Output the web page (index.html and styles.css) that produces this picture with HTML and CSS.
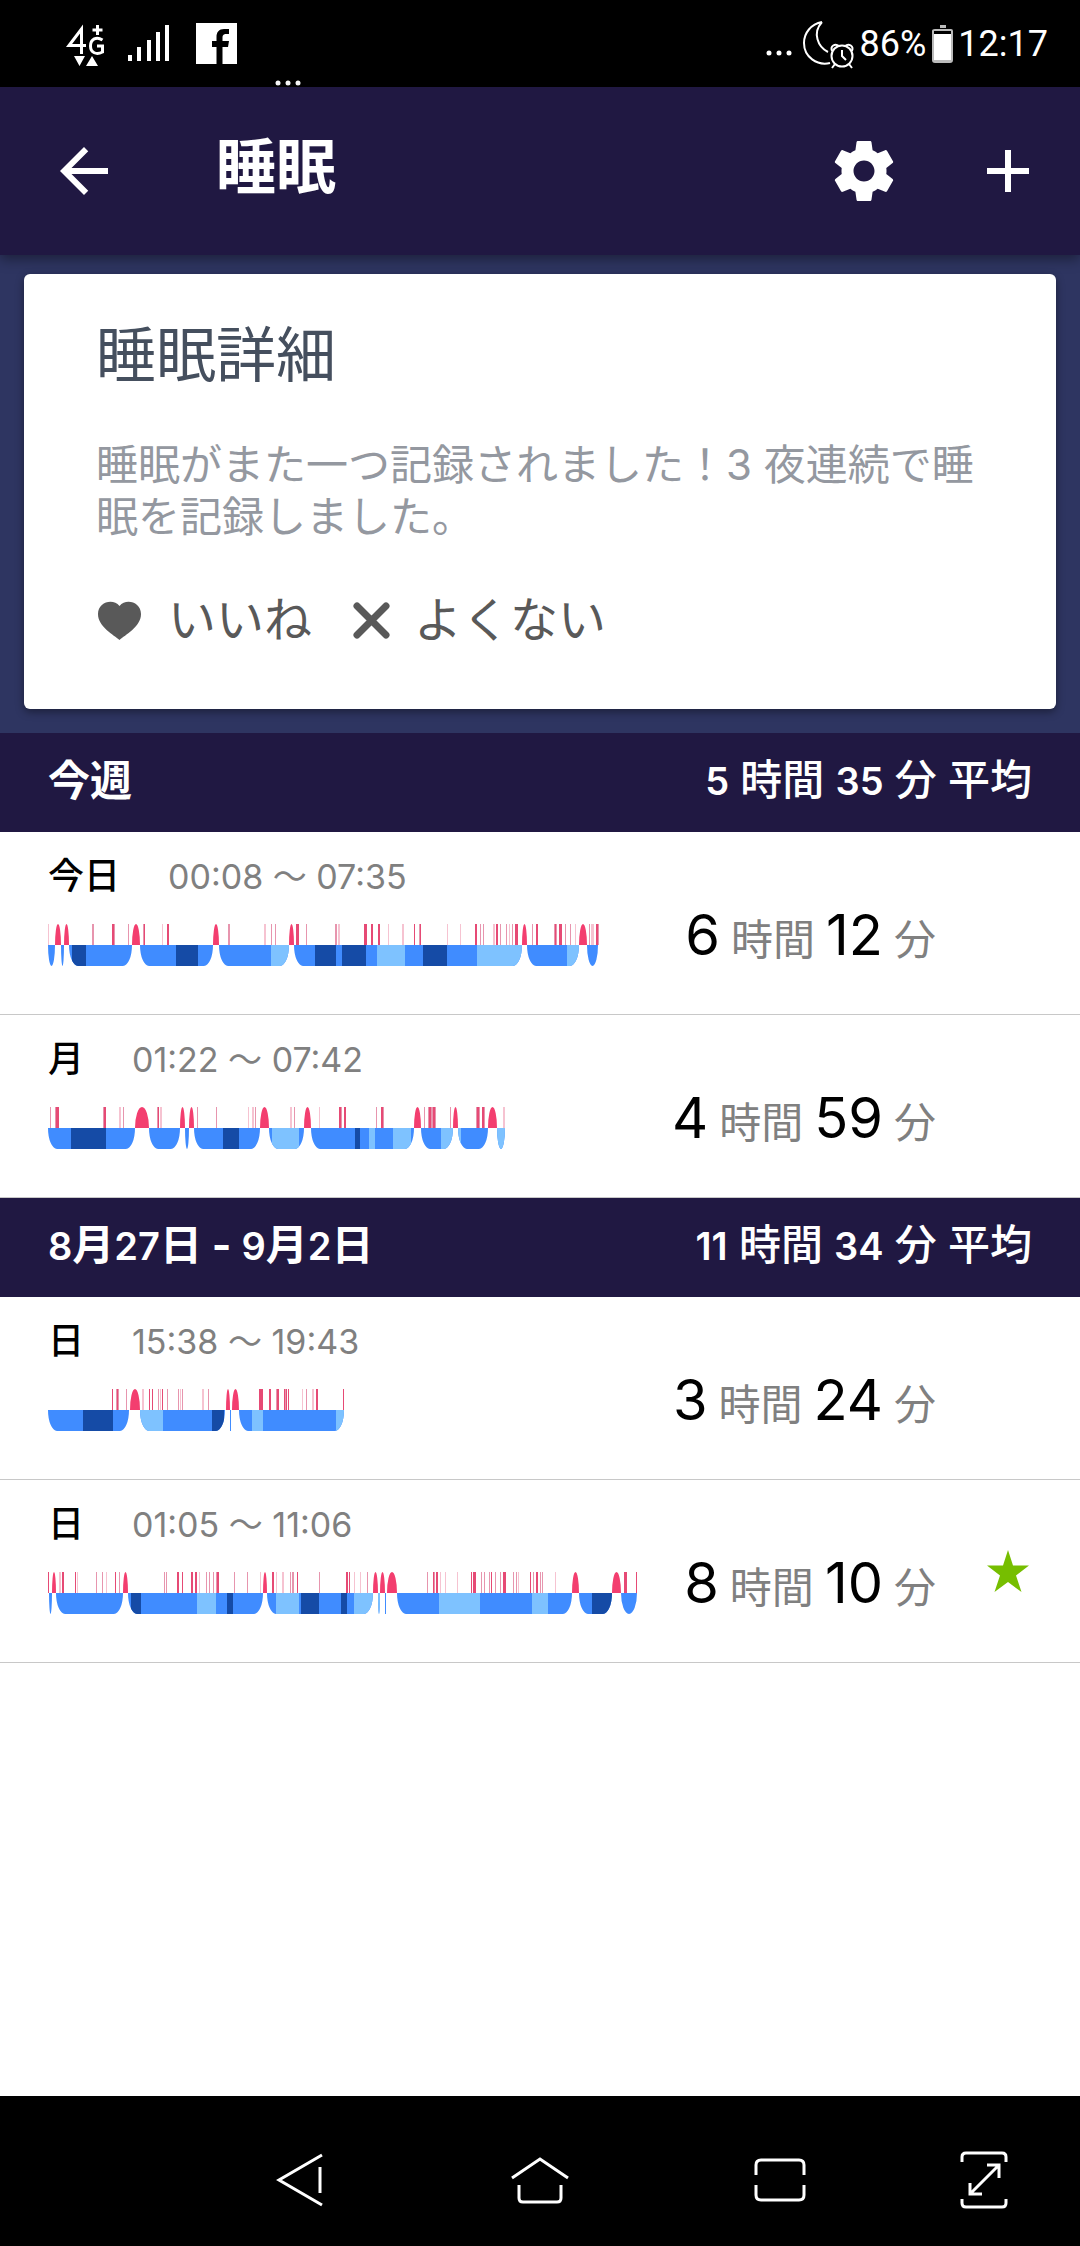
FILE: index.html
```html
<!DOCTYPE html>
<html lang="ja">
<head>
<meta charset="utf-8">
<meta name="viewport" content="width=device-width, initial-scale=1">
<title>睡眠</title>
<link rel="stylesheet" href="styles.css">
</head>
<body>
<div class="status">
  <svg class="status-icons" width="260" height="87" viewBox="0 0 260 87" aria-hidden="true">
    <g fill="none" stroke="#fff">
      <path d="M81.500 54V29L69 45.500h17" stroke-width="3"/>
      <path d="M102.500 40c-6-4-12-1-12 6s6 9 12 6v-6h-5.500" stroke-width="3"/>
      <path d="M97.500 25v10M92.500 30h10" stroke-width="3"/>
    </g>
    <path fill="#fff" d="M74 56h11l-5.500 10zM86 66h12l-6-10z"/>
    <path fill="#fff" d="M128 55h4v6h-4zM137 47h4v14h-4zM147 40h4v21h-4zM156 32h4v29h-4zM165 25h4v36h-4z"/>
    <path fill="#fff" d="M196 23h41v41h-14.500V47h5.500l1-6h-6.500v-3c0-3 1-4 4-4h2.500v-5h-5c-5 0-7.500 3-7.500 8v4h-4.500v6h4.500v17H196z"/>
  </svg>
  <svg class="status-more" width="26" height="6" viewBox="0 0 26 6" fill="#fff" aria-hidden="true"><circle cx="3" cy="3" r="2.500"/><circle cx="13" cy="3" r="2.500"/><circle cx="23" cy="3" r="2.500"/></svg>
  <div class="status-right">
    <svg width="92" height="87" viewBox="0 0 92 87" aria-hidden="true">
      <g fill="#fff"><circle cx="4" cy="53" r="2.500"/><circle cx="14" cy="53" r="2.500"/><circle cx="24" cy="53" r="2.500"/></g>
      <g fill="none" stroke="#fff" stroke-width="2">
        <path d="M57 22C46 24 39 33 39 43c0 14 13 23 26 20M57 22c-10 11-4 25 6 30"/>
        <circle cx="77" cy="56" r="10.500"/>
        <path d="M77 50v6l4 4M70 64l-3 4M84 64l3 4M67 51c-2-5 3-8 7-5M87 51c2-5-3-8-7-5"/>
      </g>
    </svg>
    <span class="battery-level">86%</span>
    <svg width="22" height="38" viewBox="0 0 22 38" aria-hidden="true"><path fill="#bbb" d="M8 0h6v3H8zM3 4h16q2 0 2 2v29q0 3-3 3H3q-3 0-3-3V6q0-2 3-2z"/><path d="M2 6h17v3H2z"/><path fill="#fff" d="M2 9h17v26H2z"/></svg>
    <span class="clock">12:17</span>
  </div>
</div>

<header class="appbar">
  <button class="icon-button" aria-label="戻る"><svg width="72" height="72" viewBox="0 0 24 24" fill="#fff"><path d="M20 11H7.830l5.590-5.590L12 4l-8 8 8 8 1.410-1.410L7.830 13H20v-2z"/></svg></button>
  <h1 class="title">睡眠</h1>
  <button class="icon-button" aria-label="設定"><svg width="72" height="72" viewBox="0 0 24 24" fill="#fff"><path d="M19.430 12.980c.04-.32.07-.64.07-.98s-.03-.66-.07-.98l2.110-1.650c.19-.15.24-.42.12-.64l-2-3.460c-.12-.22-.39-.3-.61-.22l-2.490 1c-.52-.4-1.080-.73-1.690-.98l-.38-2.650C14.460 2.180 14.250 2 14 2h-4c-.25 0-.46.18-.49.42l-.38 2.650c-.61.25-1.170.59-1.690.98l-2.490-1c-.23-.09-.49 0-.61.22l-2 3.460c-.13.22-.07.49.12.64l2.110 1.650c-.04.32-.07.65-.07.98s.03.66.07.98l-2.110 1.650c-.19.15-.24.42-.12.64l2 3.460c.12.22.39.3.61.22l2.490-1c.52.4 1.080.73 1.690.98l.38 2.650c.03.24.24.42.49.42h4c.25 0 .46-.18.49-.42l.38-2.650c.61-.25 1.170-.59 1.690-.98l2.490 1c.23.09.49 0 .61-.22l2-3.460c.12-.22.07-.49-.12-.64l-2.110-1.650zM12 15.500c-1.930 0-3.500-1.570-3.500-3.500s1.570-3.500 3.500-3.500 3.500 1.570 3.500 3.500-1.570 3.500-3.500 3.500z"/></svg></button>
  <button class="icon-button" aria-label="追加"><svg width="72" height="72" viewBox="0 0 24 24" fill="#fff"><path d="M19 13h-6v6h-2v-6H5v-2h6V5h2v6h6v2z"/></svg></button>
</header>

<main class="content">
  <section class="tip">
    <article class="card">
      <h2 class="card-title">睡眠詳細</h2>
      <p class="card-text">睡眠がまた一つ記録されました！3 夜連続で睡眠を記録しました。</p>
      <div class="card-actions">
        <button class="vote"><svg width="48" height="42" viewBox="0 0 48 42" fill="#595959" aria-hidden="true"><path d="M23.500 41C18 36 2 28 2 15 2 3 17-1 23.500 7 30-1 45 3 45 15c0 13-16 21-21.500 26z"/></svg>いいね</button>
        <button class="vote vote-no"><svg width="42" height="42" viewBox="0 0 42 42" fill="none" stroke="#595959" stroke-width="7" stroke-linecap="round" aria-hidden="true"><path d="M6 7l29 29M35 7L6 36"/></svg>よくない</button>
      </div>
    </article>
  </section>

  <section>
    <h2 class="week"><span>今週</span><span class="average"><span class="n">5</span> 時間 <span class="n">35</span> 分 平均</span></h2>
    <ul class="nights">
      <li class="night">
        <div class="night-info">
          <p class="night-head"><b class="day">今日</b><span class="range">00:08 〜 07:35</span></p>
          <svg class="chart" width="552" height="42" viewBox="0 0 552 42" role="img" aria-label="睡眠グラフ">
            <clipPath id="c1"><rect width="7" height="42" rx="9" ry="21"/><rect x="13" width="3" height="42" rx="9" ry="21"/><rect x="21" width="63" height="42" rx="9" ry="21"/><rect x="92" width="73" height="42" rx="9" ry="21"/><rect x="171" width="70" height="42" rx="9" ry="21"/><rect x="246" width="228" height="42" rx="9" ry="21"/><rect x="479" width="52" height="42" rx="9" ry="21"/><rect x="539" width="11" height="42" rx="9" ry="21"/></clipPath>
            <g class="band" clip-path="url(#c1)"><path class="asleep" d="M0 31.500h552"/><path class="deep" d="M24 31.500h14M128 31.500h22M267 31.500h21M294 31.500h24M375 31.500h24"/><path class="light" d="M223 31.500h18M329 31.500h28M429 31.500h45M519 31.500h12"/></g>
            <path class="wake" d="M7 21a3 21 0 0 1 6 0zM16 21a2.500 21 0 0 1 5 0zM84 21a4 21 0 0 1 8 0zM165 21a3 21 0 0 1 6 0zM241 21a2.500 21 0 0 1 5 0zM474 21a2.500 21 0 0 1 5 0zM531 21a4 21 0 0 1 8 0z"/>
            <g class="band"><path class="t3" d="M0 10.500h1M114 10.500h1M216 10.500h2M290 10.500h2M340 10.500h1M354 10.500h2M399 10.500h1M412 10.500h1M445 10.500h2M461 10.500h1M527 10.500h1M543 10.500h3"/><path class="t2" d="M44 10.500h2M66 10.500h1M80 10.500h1M95 10.500h1M180 10.500h2M223 10.500h1M227 10.500h1M258 10.500h1M287 10.500h2M371 10.500h1M432 10.500h1M435 10.500h1M452 10.500h1M458 10.500h1M464 10.500h1M484 10.500h1M506 10.500h3M517 10.500h1M522 10.500h1M541 10.500h1M550 10.500h1"/><path class="t1" d="M64 10.500h2M96 10.500h1M119 10.500h2M248 10.500h3M316 10.500h3M323 10.500h2M330 10.500h2M366 10.500h1M372 10.500h1M427 10.500h2M448 10.500h2M467 10.500h3M488 10.500h2M507 10.500h1M511 10.500h3M548 10.500h2"/></g>
          </svg>
        </div>
        <p class="duration"><span class="big">6</span> 時間 <span class="big">12</span> 分</p>
      </li>
      <li class="night">
        <div class="night-info">
          <p class="night-head"><b class="day">月</b><span class="range">01:22 〜 07:42</span></p>
          <svg class="chart" width="458" height="42" viewBox="0 0 458 42" role="img" aria-label="睡眠グラフ">
            <clipPath id="c2"><rect width="87" height="42" rx="9" ry="21"/><rect x="101" width="31" height="42" rx="9" ry="21"/><rect x="137" width="4" height="42" rx="9" ry="21"/><rect x="146" width="66" height="42" rx="9" ry="21"/><rect x="221" width="35" height="42" rx="9" ry="21"/><rect x="263" width="103" height="42" rx="9" ry="21"/><rect x="373" width="32" height="42" rx="9" ry="21"/><rect x="410" width="30" height="42" rx="9" ry="21"/><rect x="449" width="8" height="42" rx="9" ry="21"/></clipPath>
            <g class="band" clip-path="url(#c2)"><path class="asleep" d="M0 31.500h458"/><path class="deep" d="M23 31.500h35M175 31.500h16M307 31.500h5"/><path class="light" d="M224 31.500h27M321 31.500h6M345 31.500h18M393 31.500h12M410 31.500h3M449 31.500h8"/></g>
            <path class="wake" d="M87 21a7 21 0 0 1 14 0zM132 21a2.500 21 0 0 1 5 0zM141 21a2.500 21 0 0 1 5 0zM212 21a4.500 21 0 0 1 9 0zM256 21a3.500 21 0 0 1 7 0zM366 21a3.500 21 0 0 1 7 0zM405 21a2.500 21 0 0 1 5 0zM440 21a4.500 21 0 0 1 9 0z"/>
            <g class="band"><path class="t3" d="M71 10.500h2M112 10.500h2M200 10.500h1M204 10.500h2M242 10.500h2M271 10.500h1M455 10.500h2"/><path class="t2" d="M2 10.500h1M7 10.500h1M55 10.500h1M75 10.500h1M109 10.500h1M149 10.500h1M168 10.500h1M207 10.500h1M246 10.500h1M291 10.500h3M328 10.500h1M333 10.500h3M376 10.500h1M380 10.500h8M402 10.500h1M428 10.500h4M434 10.500h3"/><path class="t1" d="M8 10.500h3M56 10.500h2M110 10.500h1M291 10.500h2M296 10.500h2M333 10.500h2M381 10.500h2M385 10.500h2M429 10.500h2M434 10.500h2"/></g>
          </svg>
        </div>
        <p class="duration"><span class="big">4</span> 時間 <span class="big">59</span> 分</p>
      </li>
    </ul>
  </section>

  <section>
    <h2 class="week"><span><span class="n">8</span>月<span class="n">27</span>日 - <span class="n">9</span>月<span class="n">2</span>日</span><span class="average"><span class="n">11</span> 時間 <span class="n">34</span> 分 平均</span></h2>
    <ul class="nights">
      <li class="night">
        <div class="night-info">
          <p class="night-head"><b class="day">日</b><span class="range">15:38 〜 19:43</span></p>
          <svg class="chart" width="297" height="42" viewBox="0 0 297 42" role="img" aria-label="睡眠グラフ">
            <clipPath id="c3"><rect width="81" height="42" rx="9" ry="21"/><rect x="92" width="85" height="42" rx="9" ry="21"/><rect x="182" width="1" height="42"/><rect x="191" width="105" height="42" rx="9" ry="21"/></clipPath>
            <g class="band" clip-path="url(#c3)"><path class="asleep" d="M0 31.500h297"/><path class="deep" d="M35 31.500h30M164 31.500h12"/><path class="light" d="M92 31.500h23M204 31.500h11M288 31.500h8"/></g>
            <path class="wake" d="M82 21a5 21 0 0 1 10 0zM178 21a2 21 0 0 1 4 0zM184 21a3.500 21 0 0 1 7 0z"/>
            <g class="band"><path class="t3" d="M94 10.500h2M112 10.500h1M132 10.500h1M154 10.500h2M254 10.500h1M264 10.500h2"/><path class="t2" d="M68 10.500h3M78 10.500h1M110 10.500h1M119 10.500h1M130 10.500h1M134 10.500h1M160 10.500h1M228 10.500h3M236 10.500h2M258 10.500h1"/><path class="t1" d="M64 10.500h1M69 10.500h1M101 10.500h1M104 10.500h1M114 10.500h1M211 10.500h4M221 10.500h2M229 10.500h2M236 10.500h1M238 10.500h1M240 10.500h1M268 10.500h2M295 10.500h1"/></g>
          </svg>
        </div>
        <p class="duration"><span class="big">3</span> 時間 <span class="big">24</span> 分</p>
      </li>
      <li class="night">
        <div class="night-info">
          <p class="night-head"><b class="day">日</b><span class="range">01:05 〜 11:06</span></p>
          <svg class="chart" width="590" height="42" viewBox="0 0 590 42" role="img" aria-label="睡眠グラフ">
            <clipPath id="c4"><rect x="1" width="3" height="42" rx="9" ry="21"/><rect x="8" width="67" height="42" rx="9" ry="21"/><rect x="80" width="135" height="42" rx="9" ry="21"/><rect x="219" width="106" height="42" rx="9" ry="21"/><rect x="330" width="2" height="42" rx="9" ry="21"/><rect x="337" width="1" height="42"/><rect x="349" width="175" height="42" rx="9" ry="21"/><rect x="531" width="33" height="42" rx="9" ry="21"/><rect x="573" width="16" height="42" rx="9" ry="21"/></clipPath>
            <g class="band" clip-path="url(#c4)"><path class="asleep" d="M0 31.500h590"/><path class="deep" d="M83 31.500h10M179 31.500h6M253 31.500h18M293 31.500h6M544 31.500h20"/><path class="light" d="M149 31.500h19M228 31.500h23M306 31.500h26M391 31.500h41M484 31.500h16"/></g>
            <path class="wake" d="M4 21a2 21 0 0 1 4 0zM75 21a2.500 21 0 0 1 5 0zM215 21a2 21 0 0 1 4 0zM325 21a2.500 21 0 0 1 5 0zM332 21a2.500 21 0 0 1 5 0zM339 21a5 21 0 0 1 10 0zM524 21a3.500 21 0 0 1 7 0zM564 21a4.500 21 0 0 1 9 0z"/>
            <g class="band"><path class="t3" d="M11 10.500h2M29 10.500h1M58 10.500h1M151 10.500h1M212 10.500h1M228 10.500h1M234 10.500h2M306 10.500h1M312 10.500h1M392 10.500h1M397 10.500h1M409 10.500h1M470 10.500h1M507 10.500h1"/><path class="t2" d="M48 10.500h1M54 10.500h1M71 10.500h1M116 10.500h1M118 10.500h1M158 10.500h1M161 10.500h1M165 10.500h1M168 10.500h1M186 10.500h1M199 10.500h1M242 10.500h1M244 10.500h2M271 10.500h1M319 10.500h1M379 10.500h1M386 10.500h1M433 10.500h1M436 10.500h1M441 10.500h1M447 10.500h1M452 10.500h1M465 10.500h1M468 10.500h1M485 10.500h1M492 10.500h1M494 10.500h1"/><path class="t1" d="M0 10.500h1M14 10.500h2M27 10.500h1M67 10.500h1M129 10.500h2M134 10.500h1M143 10.500h2M147 10.500h2M169 10.500h2M224 10.500h2M249 10.500h1M298 10.500h2M301 10.500h1M385 10.500h1M388 10.500h2M423 10.500h1M425 10.500h3M443 10.500h1M455 10.500h3M482 10.500h1M488 10.500h2M576 10.500h3M588 10.500h1"/></g>
          </svg>
        </div>
        <p class="duration"><span class="big">8</span> 時間 <span class="big">10</span> 分</p>
        <svg class="star" width="42" height="42" viewBox="0 0 42 42" fill="#76be00" role="img" aria-label="目標達成"><path d="M21 0l5 15.500h16L29 25.500 34.500 42 21 32 7.500 42 13 25.500 0 15.500h16z"/></svg>
      </li>
    </ul>
  </section>
</main>

<nav class="navbar">
  <button class="nav-button" aria-label="戻る"><svg width="60" height="60" viewBox="0 0 60 60"><path d="M52 5L9 30l43 25M50 17v26"/></svg></button>
  <button class="nav-button" aria-label="ホーム"><svg width="60" height="60" viewBox="0 0 60 60"><path d="M2 28L30 9l28 19M9 35v13q0 4 4 4h34q4 0 4-4V35"/></svg></button>
  <button class="nav-button" aria-label="最近のアプリ"><svg width="60" height="60" viewBox="0 0 60 60"><path d="M6 25V15q0-5 5-5h38q5 0 5 5v10M6 35v10q0 5 5 5h38q5 0 5-5V35"/></svg></button>
  <button class="nav-button" aria-label="全画面"><svg width="60" height="60" viewBox="0 0 60 60"><path d="M8 12V7q0-4 4-4h36q4 0 4 4v5M8 49v4q0 4 4 4h36q4 0 4-4v-4M16 44l29-29M33 15h12v13M16 33v11h12"/></svg></button>
</nav>
</body>
</html>
```
FILE: styles.css
```css
* {
  box-sizing: border-box;
}

body {
  margin: 0;
  min-height: 100vh;
  display: flex;
  flex-direction: column;
  background: #fff;
  color: #000;
  font-family: Inter, "Noto Sans CJK JP", sans-serif;
}

h1, h2, p, ul {
  margin: 0;
  padding: 0;
}

button {
  padding: 0;
  border: 0;
  background: none;
  color: inherit;
  font: inherit;
}

svg {
  display: block;
  flex: none;
}

/* Status bar */
.status {
  position: relative;
  display: flex;
  justify-content: space-between;
  height: 87px;
  padding-right: 32px;
  background: #000;
  color: #fff;
  font: 36px/40px Roboto, sans-serif;
}

.status-more {
  position: absolute;
  left: 275px;
  bottom: 1px;
}

.status-right {
  display: flex;
  align-items: center;
}

.battery-level {
  margin: 0 6px 0 3px;
}

.clock {
  margin-left: 4px;
}

/* App bar */
.appbar {
  position: relative;
  display: flex;
  align-items: center;
  gap: 72px;
  height: 168px;
  padding: 0 36px 0 48px;
  background: #201842;
  color: #fff;
  box-shadow: 0 4px 12px rgba(0, 0, 0, 0.4);
}

.icon-button {
  flex: none;
}

.title {
  flex: 1;
  padding: 0 0 8px 24px;
  font-size: 60px;
  font-weight: 700;
  line-height: 72px;
}

.content {
  flex: 1;
}

/* Tip card */
.tip {
  padding: 19px 24px 24px;
  background: #2e3561;
}

.card {
  padding: 41px 72px 57px;
  border-radius: 6px;
  background: #fff;
  box-shadow: 0 3px 8px rgba(0, 0, 0, 0.4);
}

.card-title {
  color: #454f5e;
  font-size: 60px;
  font-weight: 400;
  line-height: 80px;
}

.card-text {
  margin-top: 44px;
  color: #9498a0;
  font-size: 42px;
  line-height: 52px;
}

.card-actions {
  display: flex;
  margin-top: 45px;
  color: #595959;
  font-size: 48px;
  line-height: 64px;
}

.vote {
  display: flex;
  align-items: center;
  gap: 24px;
}

.vote-no {
  gap: 21px;
  margin-left: 39px;
}

/* Weekly header */
.week {
  display: flex;
  justify-content: space-between;
  align-items: center;
  height: 99px;
  padding: 0 48px 4px;
  background: #201842;
  color: #fff;
  font-size: 42px;
  font-weight: 700;
  line-height: 60px;
}

.average {
  font-weight: 500;
}

.n {
  font-size: 38px;
  font-weight: 600;
}

/* Nights */
.nights {
  list-style: none;
}

.night {
  display: grid;
  grid-template-columns: 1fr auto 144px;
  height: 183px;
  padding-left: 48px;
  border-bottom: 1px solid #c8c8c8;
}

.night-head {
  display: flex;
  align-items: baseline;
  gap: 48px;
  padding-top: 20px;
  line-height: 48px;
}

.day {
  font-size: 36px;
  font-weight: 500;
}

.range {
  color: #808080;
  font-size: 34px;
}

.chart {
  margin-top: 23px;
}

.band {
  fill: none;
  stroke-width: 21;
}

.asleep { stroke: #408cff; }
.deep { stroke: #154ba6; }
.light { stroke: #7ec2ff; }
.wake { fill: #f33e6f; }
.t1 { stroke: #e64a75; }
.t2 { stroke: #e795ae; }
.t3 { stroke: #f6c3d1; }

.duration {
  display: flex;
  align-items: baseline;
  gap: 11px;
  padding-top: 71px;
  color: #808080;
  font-size: 42px;
  line-height: 64px;
}

.big {
  color: #000;
  font-size: 56px;
}

.star {
  place-self: center;
}

/* System navigation */
.navbar {
  display: grid;
  grid-template-columns: 1fr 1fr 1fr 168px;
  height: 150px;
  padding: 18px 12px 0 180px;
  background: #000;
}

.nav-button {
  display: grid;
  place-items: center;
}

.nav-button svg {
  fill: none;
  stroke: #fff;
  stroke-width: 3;
}
```
